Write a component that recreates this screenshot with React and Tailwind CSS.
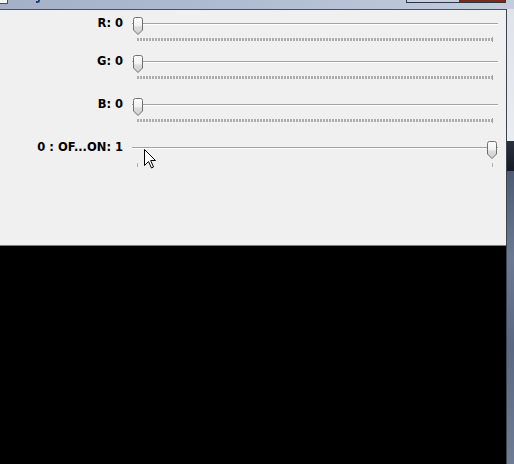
import React from "react";

function Thumb() {
  return (
    <svg width="10" height="18" viewBox="0 0 10 18" className="block">
      <defs>
        <linearGradient id="tg" x1="0" y1="0" x2="0" y2="1">
          <stop offset="0" stopColor="#fdfdfd" />
          <stop offset="0.5" stopColor="#f0f0f0" />
          <stop offset="0.55" stopColor="#dcdcdc" />
          <stop offset="1" stopColor="#d0d0d0" />
        </linearGradient>
      </defs>
      <path
        d="M0.5 2.5 Q0.5 0.5 2.5 0.5 H7.5 Q9.5 0.5 9.5 2.5 V13 L5 17.5 L0.5 13 Z"
        fill="url(#tg)"
        stroke="#6f6f6f"
        strokeWidth="1"
      />
    </svg>
  );
}

function Slider({ atEnd, dense }) {
  return (
    <div className="relative w-[366px] h-[24px] mt-[1px]">
      <div className="absolute left-0 right-0 top-[6px] h-[2px] border-t border-t-[#a3a3a3] border-b border-b-white" />
      <div className={"absolute top-0 " + (atEnd ? "left-[355px]" : "left-[1px]")}>
        <Thumb />
      </div>
      {dense ? (
        <div className="absolute top-[21px] left-[5px] w-[356px] h-[3px] flex">
          <div className="flex-1 h-[3px] bg-[repeating-linear-gradient(90deg,#adadad_0px,#adadad_2px,transparent_2px,transparent_3px)]" />
          <div className="w-[1px] h-[5px] -mt-[1px] bg-[#a0a0a0]" />
        </div>
      ) : (
        <div className="absolute top-[22px] left-[5px] w-[356px] h-[4px] flex justify-between">
          <div className="w-[1px] h-[4px] bg-[#b0b0b0]" />
          <div className="w-[1px] h-[4px] bg-[#b0b0b0]" />
        </div>
      )}
    </div>
  );
}

function Row({ label, h, atEnd, dense = true }) {
  return (
    <div className={"flex items-start " + h}>
      <div className="w-[124px] mt-[1px] text-right text-[11.5px] leading-[13px] font-bold text-black font-['DejaVu_Sans',sans-serif] pr-[1px]">
        {label}
      </div>
      <div className="ml-[8px]">
        <Slider atEnd={atEnd} dense={dense} />
      </div>
    </div>
  );
}

export default function App() {
  return (
    <div className="w-[514px] h-[464px] flex flex-col overflow-hidden bg-black">
      {/* title bar remnant */}
      <div className="h-[9px] flex items-start bg-[linear-gradient(90deg,#a3b0c6,#b4c0d4_60%,#c3cddd)]">
        <div className="w-[8px] h-[4px] bg-[#f4f6f8] border-r border-b border-[#4a5262]" />
        <div className="ml-[28px] w-[4px] h-[3px] border-b-2 border-r-2 border-[#1e3a6e] rounded-br-[3px]" />
        <div className="ml-auto mr-[8px] flex w-[100px] h-[3px] border border-t-0 border-[#2e3442]">
          <div className="flex-1 bg-[#c6cfdd]" />
          <div className="w-[46px] bg-[#7c2a1c]" />
        </div>
      </div>
      <div className="flex-1 flex">
        <div className="w-[507px] flex flex-col border-r border-[#3e4350]">
          <div className="h-[1px] bg-[#4a5262]" />
          <div className="relative h-[235px] bg-[#f0f0f0] pt-[6px]">
            <Row label="R: 0" h="h-[38px]" />
            <Row label="G: 0" h="h-[43px]" />
            <Row label="B: 0" h="h-[43px]" />
            <Row label="0 : OF...ON: 1" h="h-[40px]" atEnd dense={false} />
            {/* mouse cursor */}
            <svg
              className="absolute left-[144px] top-[139px]"
              width="13"
              height="20"
              viewBox="0 0 13 20"
            >
              <path
                d="M0.5 0.5 L0.5 16.5 L4.5 12.5 L7.5 19 L9.5 18 L6.7 11.5 L11.5 11.5 Z"
                fill="#ffffff"
                stroke="#000000"
                strokeWidth="1"
                strokeLinejoin="miter"
              />
            </svg>
          </div>
          <div className="h-[1px] bg-[#7d7d7d]" />
          <div className="flex-1 bg-black" />
        </div>
        <div className="flex-1 flex flex-col">
          <div className="h-[132px] bg-[linear-gradient(180deg,#dfe3ea,#e9ecf0)]" />
          <div className="h-[30px] bg-[linear-gradient(180deg,#2a3140,#151a24)]" />
          <div className="flex-1 bg-[linear-gradient(180deg,#4e5b74,#6b7994_30%,#5a6883_60%,#6e7c96)]" />
        </div>
      </div>
    </div>
  );
}
